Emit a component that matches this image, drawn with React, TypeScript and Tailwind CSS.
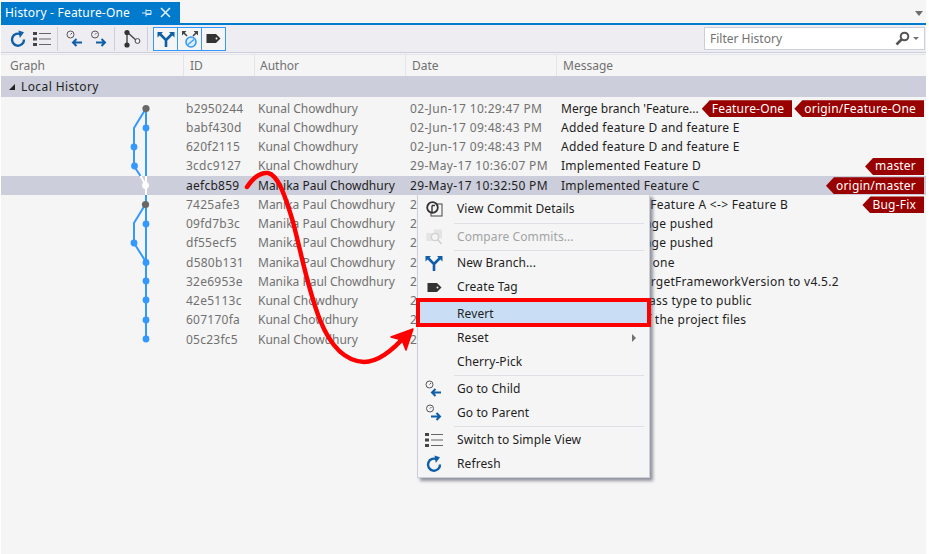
const font = "[font-family:'Noto_Sans',sans-serif]";

type Row = { id: string; author: string; date: string; msg: string; tags?: string[]; selected?: boolean };

const rows: Row[] = [
  { id: "b2950244", author: "Kunal Chowdhury", date: "02-Jun-17 10:29:47 PM", msg: "Merge branch 'Feature...", tags: ["Feature-One", "origin/Feature-One"] },
  { id: "babf430d", author: "Kunal Chowdhury", date: "02-Jun-17 09:48:43 PM", msg: "Added feature D and feature E" },
  { id: "620f2115", author: "Kunal Chowdhury", date: "02-Jun-17 09:48:43 PM", msg: "Added feature D and feature E" },
  { id: "3cdc9127", author: "Kunal Chowdhury", date: "29-May-17 10:36:07 PM", msg: "Implemented Feature D", tags: ["master"] },
  { id: "aefcb859", author: "Manika Paul Chowdhury", date: "29-May-17 10:32:50 PM", msg: "Implemented Feature C", tags: ["origin/master"], selected: true },
  { id: "7425afe3", author: "Manika Paul Chowdhury", date: "29-May-17 10:20:11 PM", msg: "Merge branch: Feature A <-> Feature B", tags: ["Bug-Fix"] },
  { id: "09fd7b3c", author: "Manika Paul Chowdhury", date: "29-May-17 10:18:32 PM", msg: "One more change pushed" },
  { id: "df55ecf5", author: "Manika Paul Chowdhury", date: "29-May-17 10:15:02 PM", msg: "One more change pushed" },
  { id: "d580b131", author: "Manika Paul Chowdhury", date: "29-May-17 10:10:45 PM", msg: "Adding feature one" },
  { id: "32e6953e", author: "Manika Paul Chowdhury", date: "29-May-17 10:02:19 PM", msg: "Updated the TargetFrameworkVersion to v4.5.2" },
  { id: "42e5113c", author: "Kunal Chowdhury", date: "28-May-17 09:41:27 PM", msg: "Changed the class type to public" },
  { id: "607170fa", author: "Kunal Chowdhury", date: "28-May-17 09:35:50 PM", msg: "Published all of the project files" },
  { id: "05c23fc5", author: "Kunal Chowdhury", date: "28-May-17 09:33:14 PM", msg: "Initial commit" },
];

function Refresh({ color = "#0e5ea8" }: { color?: string }) {
  return (
    <svg width="18" height="18" viewBox="0 0 18 18" fill="none">
      <path d="M12.2 4.6A6 6 0 1 0 15 9.5" stroke={color} strokeWidth="2.4" />
      <path d="M9.5 0.5 15 2.2 10.8 8Z" fill={color} />
    </svg>
  );
}

function ListIcon() {
  return (
    <svg width="18" height="16" viewBox="0 0 18 16" fill="#444">
      <rect x="0" y="1" width="4" height="3" />
      <rect x="0" y="6.5" width="4" height="3" />
      <rect x="0" y="12" width="4" height="3" />
      <rect x="6" y="2" width="12" height="1" fill="#666" />
      <rect x="6" y="7.5" width="12" height="1" fill="#666" />
      <rect x="6" y="13" width="12" height="1" fill="#666" />
    </svg>
  );
}

function ClockArrow({ dir }: { dir: "left" | "right" }) {
  return (
    <svg width="18" height="18" viewBox="0 0 18 18" fill="none">
      <circle cx={dir === "left" ? 4.5 : 5} cy="4.5" r="3.5" stroke="#555" strokeWidth="1" />
      <path d={dir === "left" ? "M4.5 4.5 6 3" : "M5 4.5 6.5 3"} stroke="#555" strokeWidth="1" />
      {dir === "left" ? (
        <path d="M16 12.5H7M10.5 9 7 12.5 10.5 16" stroke="#0e5ea8" strokeWidth="2" />
      ) : (
        <path d="M6 12.5H15M11.5 9 15 12.5 11.5 16" stroke="#0e5ea8" strokeWidth="2" />
      )}
    </svg>
  );
}

function GraphIcon() {
  return (
    <svg width="18" height="20" viewBox="0 0 18 20" fill="none">
      <path d="M4 3V16M4 3 14 12" stroke="#444" strokeWidth="1.4" />
      <circle cx="4" cy="3.5" r="2.6" fill="#333" />
      <circle cx="4" cy="16" r="2.6" fill="#333" />
      <circle cx="14.5" cy="12" r="2.4" fill="#f5f5f5" stroke="#444" />
    </svg>
  );
}

function BranchIcon() {
  return (
    <svg width="18" height="16" viewBox="0 0 18 16" fill="none">
      <path d="M9 16V9L3 3M9 9 15 3" stroke="#0e5ea8" strokeWidth="2.6" />
      <path d="M0.5 1H6L0.5 6.5ZM17.5 1H12L17.5 6.5Z" fill="#0e5ea8" />
    </svg>
  );
}

function MergeToggleIcon() {
  return (
    <svg width="18" height="18" viewBox="0 0 18 18" fill="none">
      <path d="M1 1H5.5L1 5.5ZM17 1H12.5L17 5.5Z" fill="#444" />
      <path d="M2.5 2.5 6 6M15.5 2.5 12 6" stroke="#444" strokeWidth="1.6" />
      <circle cx="10" cy="12" r="5" fill="#dceeff" stroke="#3399ff" strokeWidth="1.6" />
      <path d="M7 14.5 13 9.5" stroke="#3399ff" strokeWidth="1.2" />
    </svg>
  );
}

function TagIcon({ color = "#333" }: { color?: string }) {
  return (
    <svg width="15" height="11" viewBox="0 0 15 11">
      <path d="M0.5 1H10L14.5 5.5 10 10H0.5Z" fill={color} />
      <circle cx="10.5" cy="5.5" r="1" fill="#f5f5f5" />
    </svg>
  );
}

function DetailsIcon() {
  return (
    <svg width="17" height="16" viewBox="0 0 17 16" fill="none">
      <rect x="5" y="3" width="11" height="12" fill="#f5f5f5" stroke="#444" />
      <circle cx="6.5" cy="6.5" r="5.3" fill="#f5f5f5" stroke="#333" strokeWidth="1.8" />
      <path d="M6 4.5V12M6 4.5H9" stroke="#333" strokeWidth="1.4" />
    </svg>
  );
}

function CompareIcon() {
  return (
    <svg width="17" height="16" viewBox="0 0 17 16" fill="none">
      <rect x="8" y="0.5" width="8" height="9" fill="#e4e4e4" />
      <rect x="0.5" y="4" width="7" height="8" fill="#e4e4e4" />
      <circle cx="9" cy="8" r="3.6" fill="#f5f5f5" stroke="#cfcfcf" strokeWidth="1.3" />
      <path d="M11.5 10.5 15.5 15" stroke="#cfcfcf" strokeWidth="1.6" />
    </svg>
  );
}

function ToolSep() {
  return <div className="mx-[6px] h-[24px] w-px bg-[#cccedb]" />;
}

function Toggle({ children }: { children: React.ReactNode }) {
  return (
    <div className="-ml-px flex h-[24px] w-[25px] items-center justify-center border border-[#3399ff] bg-[#f5f5f5]">
      {children}
    </div>
  );
}

function Graph() {
  const blue = "#3399ff";
  const xs = [146, 146, 134, 134.5, 145.5, 145.5, 146, 134, 146, 146, 146, 146, 146];
  const ys = [108.5, 128, 147, 166, 185.5, 204.5, 224, 243, 262.5, 281, 300, 320, 339];
  return (
    <svg width="929" height="554" viewBox="0 0 929 554" className="pointer-events-none absolute top-0 left-0" fill="none">
      <path d="M146 108V176M146 195V339" stroke={blue} strokeWidth="2" />
      <path d="M145 110 134 128V166L140.5 176" stroke={blue} strokeWidth="2" />
      <path d="M145 205 134 223V243L146 262" stroke={blue} strokeWidth="2" />
      <path d="M140.5 176 146 185.5M146 176V195" stroke="#ffffff" strokeWidth="2" />
      {xs.map((x, i) => (
        <circle
          key={i}
          cx={x}
          cy={ys[i]}
          r={i === 0 || i === 5 ? 3.6 : 3.4}
          fill={i === 0 || i === 5 ? "#686868" : i === 4 ? "#ffffff" : blue}
        />
      ))}
    </svg>
  );
}

function Arrow() {
  return (
    <svg width="929" height="554" viewBox="0 0 929 554" className="pointer-events-none absolute top-0 left-0" fill="none">
      <path
        d="M247 187C253 178 260 172 268 173C278 175 285 195 293 222C301 252 308 290 320 320C330 345 345 361 364 362C380 362 395 348 408 333"
        stroke="#ff0000"
        strokeWidth="4.5"
        strokeLinecap="round"
      />
      <path d="M391 337 413 329 406 350 402 340Z" fill="#ff0000" stroke="#ff0000" strokeWidth="1.5" strokeLinejoin="round" />
    </svg>
  );
}

function MenuItem({ label, icon, disabled, submenu, hot }: { label: string; icon?: React.ReactNode; disabled?: boolean; submenu?: boolean; hot?: boolean }) {
  return (
    <div
      className={`relative flex h-[24px] items-center pl-[39px] text-[12px] tracking-[0.1px] ${disabled ? "text-[#a2a4a5]" : "text-[#1e1e1e]"} ${hot ? "bg-[#c9def5]" : ""}`}
    >
      {icon && <span className="absolute left-[6px] flex h-[20px] w-[20px] items-center justify-center">{icon}</span>}
      {label}
      {submenu && <span className="absolute right-[13px] h-0 w-0 border-y-[4px] border-l-[4px] border-y-transparent border-l-[#717171]" />}
    </div>
  );
}

function MenuSep() {
  return <div className="my-[1px] ml-[36px] mr-[5px] h-px bg-[#dfdfe6]" />;
}

function ContextMenu() {
  return (
    <div className="absolute top-[194px] left-[417px] w-[233px] border border-[#cccedb] bg-[#f5f5f5] pt-[2px] pb-[1px] shadow-[3px_3px_3px_rgba(70,70,90,0.55)]">
      <MenuItem label="View Commit Details" icon={<DetailsIcon />} />
      <div className="h-[1px]" />
      <MenuSep />
      <MenuItem label="Compare Commits..." icon={<CompareIcon />} disabled />
      <div className="mt-[1px] ml-[36px] mr-[5px] h-px bg-[#dfdfe6]" />
      <MenuItem label="New Branch..." icon={<BranchIcon />} />
      <MenuItem label="Create Tag" icon={<TagIcon />} />
      <div className="h-[3px]" />
      <MenuItem label="Revert" hot />
      <MenuItem label="Reset" submenu />
      <MenuItem label="Cherry-Pick" />
      <MenuSep />
      <MenuItem label="Go to Child" icon={<ClockArrow dir="left" />} />
      <MenuItem label="Go to Parent" icon={<ClockArrow dir="right" />} />
      <MenuSep />
      <MenuItem label="Switch to Simple View" icon={<ListIcon />} />
      <MenuItem label="Refresh" icon={<Refresh />} />
      <div className="pointer-events-none absolute top-[103px] -left-[2px] h-[29px] w-[235px] border-[4px] border-[#ff0000]" />
    </div>
  );
}

function Tag({ label }: { label: string }) {
  return (
    <span className="ml-[2px] flex h-[17px] shrink-0 items-center bg-[#990000] pr-[8px] pl-[10px] text-[12px] tracking-[0.2px] text-white [clip-path:polygon(8px_0,100%_0,100%_100%,8px_100%,0_50%)]">
      {label}
    </span>
  );
}

export default function App() {
  return (
    <div className={`relative h-[554px] w-[929px] overflow-hidden bg-white text-[12px] ${font}`}>
      <div className="ml-px flex h-full w-[925px] flex-col bg-[#f5f5f5]">
        {/* Tab strip */}
        <div className="flex h-[23px] shrink-0 items-end justify-between">
          <div className="flex h-[21px] w-[179px] items-center bg-[#007acc] pl-[4px] text-[12px] tracking-[0.2px] text-white">
            <span>History - Feature-One</span>
            <svg width="12" height="12" viewBox="0 0 12 12" className="ml-[11px]" fill="none" stroke="#d5e8f5">
              <path d="M1 6H5M5 2.5V9.5M5 3.5H10V7.5H5M5 6.8H10" />
            </svg>
            <svg width="11" height="11" viewBox="0 0 11 11" className="ml-[7px]" fill="none" stroke="#e6f2fa" strokeWidth="1.5">
              <path d="M1 1 10 10M10 1 1 10" />
            </svg>
          </div>
          <span className="mr-[3px] mb-[7px] h-0 w-0 border-x-[4px] border-t-[5px] border-x-transparent border-t-[#6d6d70]" />
        </div>
        <div className="h-[2px] shrink-0 bg-[#007acc]" />

        {/* Toolbar */}
        <div className="flex h-[28px] shrink-0 items-center border-b border-[#cccedb] bg-[#eeeef2] pl-[8px]">
          <Refresh />
          <span className="ml-[6px]"><ListIcon /></span>
          <ToolSep />
          <span className="ml-[2px]"><ClockArrow dir="left" /></span>
          <span className="ml-[6px]"><ClockArrow dir="right" /></span>
          <ToolSep />
          <span className="ml-[2px]"><GraphIcon /></span>
          <ToolSep />
          <div className="flex">
            <Toggle><BranchIcon /></Toggle>
            <Toggle><MergeToggleIcon /></Toggle>
            <Toggle><TagIcon /></Toggle>
          </div>
          <div className="mr-px ml-auto flex h-[23px] w-[221px] items-center border border-[#cccedb] bg-white pr-[4px] pl-[5px] text-[12px] text-[#717171]">
            <span>Filter History</span>
            <svg width="15" height="15" viewBox="0 0 15 15" className="ml-auto" fill="none">
              <circle cx="9.5" cy="5.5" r="3.8" stroke="#555" strokeWidth="2" />
              <path d="M6.5 8.5 1.5 13.5" stroke="#555" strokeWidth="2.6" />
            </svg>
            <span className="mr-[1px] ml-[3px] h-0 w-0 border-x-[3px] border-t-[3px] border-x-transparent border-t-[#717171]" />
          </div>
        </div>

        {/* Column headers */}
        <div className="mt-px grid h-[22px] shrink-0 grid-cols-[183px_71px_151px_151px_1fr] items-center border-t border-[#e4e4ea] text-[12px] text-[#717171]">
          <div className="border-r border-[#e4e4ea] pl-[9px] leading-[21px]">Graph</div>
          <div className="border-r border-[#e4e4ea] pl-[6px] leading-[21px]">ID</div>
          <div className="border-r border-[#e4e4ea] pl-[5px] leading-[21px]">Author</div>
          <div className="border-r border-[#e4e4ea] pl-[6px] leading-[21px]">Date</div>
          <div className="pl-[6px] leading-[21px]">Message</div>
        </div>

        {/* Group row */}
        <div className="flex h-[21px] shrink-0 items-center bg-[#cccedb] pl-[8px] text-[12px] tracking-[0.4px] text-[#1e1e1e]">
          <span className="mr-[6px] h-0 w-0 border-b-[6px] border-l-[6px] border-b-[#222] border-l-transparent" />
          Local History
        </div>

        {/* Rows */}
        <div className="mt-[2px] flex flex-col">
          {rows.map((r) => (
            <div
              key={r.id}
              className={`grid h-[19.25px] grid-cols-[182px_71px_151px_151px_minmax(0,1fr)] items-center text-[12px] ${r.selected ? "bg-[#cccedb] text-[#1e1e1e]" : "text-[#717171]"}`}
            >
              <div />
              <div className="pl-[3px] tracking-[0.25px]">{r.id}</div>
              <div className="pl-[4px] whitespace-nowrap">{r.author}</div>
              <div className="pl-[5px] tracking-[0.33px] whitespace-nowrap">{r.date}</div>
              <div className={`flex items-center pr-[2px] pl-[5px] whitespace-nowrap ${r.selected ? "" : "text-[#1e1e1e]"}`}>
                <span className={r.tags?.length === 2 ? "" : "tracking-[0.27px]"}>{r.msg}</span>
                <span className="ml-auto flex">
                  {r.tags?.map((t) => <Tag key={t} label={t} />)}
                </span>
              </div>
            </div>
          ))}
        </div>
      </div>
      <Graph />
      <ContextMenu />
      <Arrow />
    </div>
  );
}
